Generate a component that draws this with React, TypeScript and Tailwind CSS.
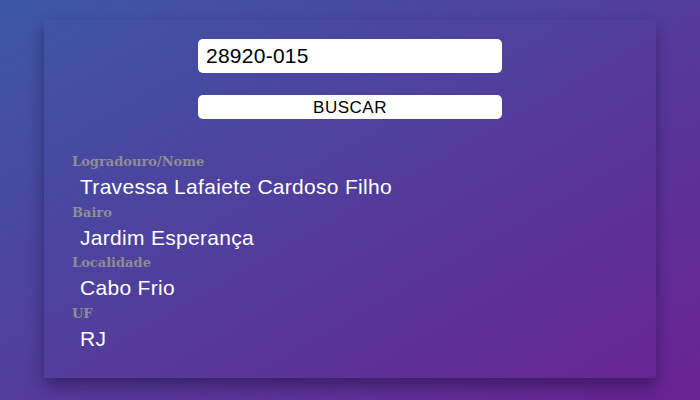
const fields = [
  { label: "Logradouro/Nome", value: "Travessa Lafaiete Cardoso Filho" },
  { label: "Bairo", value: "Jardim Esperança" },
  { label: "Localidade", value: "Cabo Frio" },
  { label: "UF", value: "RJ" },
];

export default function App() {
  return (
    <div className="w-[700px] h-[400px] overflow-hidden bg-[linear-gradient(to_bottom_right,#3b57a6,#6a2292)]">
      <div className="mx-auto mt-[20px] w-[612px] h-[358px] shadow-[0_8px_14px_rgba(20,10,50,0.45)] flex flex-col">
        <div className="flex flex-col items-center">
          <input
            defaultValue="28920-015"
            className="mt-[19px] w-[304px] h-[34px] rounded-[5px] bg-white pl-[8px] text-[21px] tracking-[0.25px] text-black outline-none font-['Liberation_Sans',Arial,sans-serif]"
          />
          <button className="mt-[22px] w-[304px] h-[24px] rounded-[5px] bg-white text-[17px] tracking-[0.5px] leading-none text-black font-['Liberation_Sans',Arial,sans-serif]">
            BUSCAR
          </button>
        </div>
        <div className="mt-[33px] pl-[28px]">
          {fields.map((f) => (
            <div key={f.label}>
              <div className="h-[20px] leading-[20px] text-[13px] font-bold text-[#8f8d96] font-['DejaVu_Serif',serif]">
                {f.label}
              </div>
              <div className="h-[30.5px] leading-[30px] pl-[8px] text-[21px] tracking-[0.3px] text-white font-['Liberation_Sans',Arial,sans-serif]">
                {f.value}
              </div>
            </div>
          ))}
        </div>
      </div>
    </div>
  );
}
